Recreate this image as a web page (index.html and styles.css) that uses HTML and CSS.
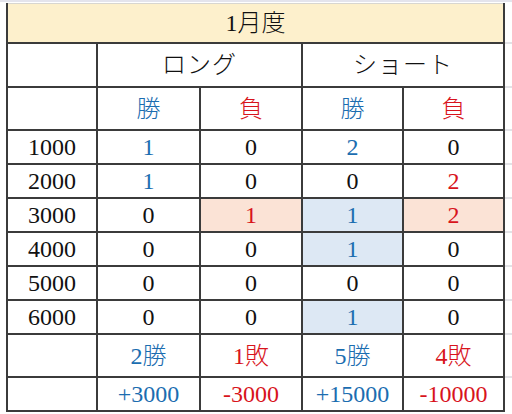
FILE: index.html
```html
<!DOCTYPE html>
<html lang="ja">
<head>
<meta charset="utf-8">
<link rel="stylesheet" href="styles.css">
</head>
<body>
<div class="rule"></div>
<div class="sheet">
  <div class="table">
    <div class="cell title span5 jp">1月度</div>

    <div class="cell"></div>
    <div class="cell kana span2 jp">ロング</div>
    <div class="cell kana span2 jp">ショート</div>

    <div class="cell"></div>
    <div class="cell blue jp">勝</div>
    <div class="cell red jp">負</div>
    <div class="cell blue jp">勝</div>
    <div class="cell red jp">負</div>

    <div class="cell">1000</div>
    <div class="cell blue">1</div>
    <div class="cell">0</div>
    <div class="cell blue">2</div>
    <div class="cell">0</div>

    <div class="cell">2000</div>
    <div class="cell blue">1</div>
    <div class="cell">0</div>
    <div class="cell">0</div>
    <div class="cell red">2</div>

    <div class="cell">3000</div>
    <div class="cell">0</div>
    <div class="cell red salmon">1</div>
    <div class="cell blue sky">1</div>
    <div class="cell red salmon">2</div>

    <div class="cell">4000</div>
    <div class="cell">0</div>
    <div class="cell">0</div>
    <div class="cell blue sky">1</div>
    <div class="cell">0</div>

    <div class="cell">5000</div>
    <div class="cell">0</div>
    <div class="cell">0</div>
    <div class="cell">0</div>
    <div class="cell">0</div>

    <div class="cell">6000</div>
    <div class="cell">0</div>
    <div class="cell">0</div>
    <div class="cell blue sky">1</div>
    <div class="cell">0</div>

    <div class="cell"></div>
    <div class="cell blue jp">2勝</div>
    <div class="cell red jp">1敗</div>
    <div class="cell blue jp">5勝</div>
    <div class="cell red jp">4敗</div>

    <div class="cell"></div>
    <div class="cell blue">+3000</div>
    <div class="cell red">-3000</div>
    <div class="cell blue">+15000</div>
    <div class="cell red">-10000</div>
  </div>
  <div class="trail">
    <div class="tcell"></div><div class="tcell"></div><div class="tcell"></div>
    <div class="tcell"></div><div class="tcell"></div><div class="tcell"></div>
    <div class="tcell"></div><div class="tcell"></div><div class="tcell"></div>
    <div class="tcell"></div><div class="tcell"></div>
  </div>
</div>
</body>
</html>
```
FILE: styles.css
```css
html, body {
  margin: 0;
  padding: 0;
  background: #ffffff;
}

.rule {
  height: 2px;
  margin-top: 0;
  background: #e4e4ec;
}

.sheet {
  display: flex;
  align-items: flex-start;
  margin-top: 1px;
  padding-left: 6px;
}

.table {
  display: grid;
  grid-template-columns: 88px 101px 100px 99px 99px;
  grid-template-rows: 39px 42px 41px 32px 32px 32px 32px 32px 32px 41px 32px;
  gap: 2px;
  padding: 0 2px 2px 2px;
  background: #3b3b3b;
  font-family: "Liberation Serif", "Noto Sans CJK JP", serif;
  font-size: 24px;
  color: #111111;
}

.cell {
  background: #ffffff;
  display: flex;
  align-items: center;
  justify-content: center;
  line-height: 1;
}

.jp {
  font-weight: 300;
}

.span5 { grid-column: span 5; }
.span2 { grid-column: span 2; }

.title {
  background: #fdf0cc;
  box-shadow: inset 0 1px 0 #d8d6d0;
}

.kana {
  letter-spacing: 1px;
}

.blue { color: #1b6db0; }
.red { color: #d8141c; }
.salmon { background: #fbe3d6; }
.sky { background: #dde8f4; }

.trail {
  flex: 1;
  display: grid;
  grid-template-rows: 39px 42px 41px 32px 32px 32px 32px 32px 32px 41px 32px;
  row-gap: 2px;
  background: #e2e2e6;
}

.tcell {
  background: #ffffff;
}
```
